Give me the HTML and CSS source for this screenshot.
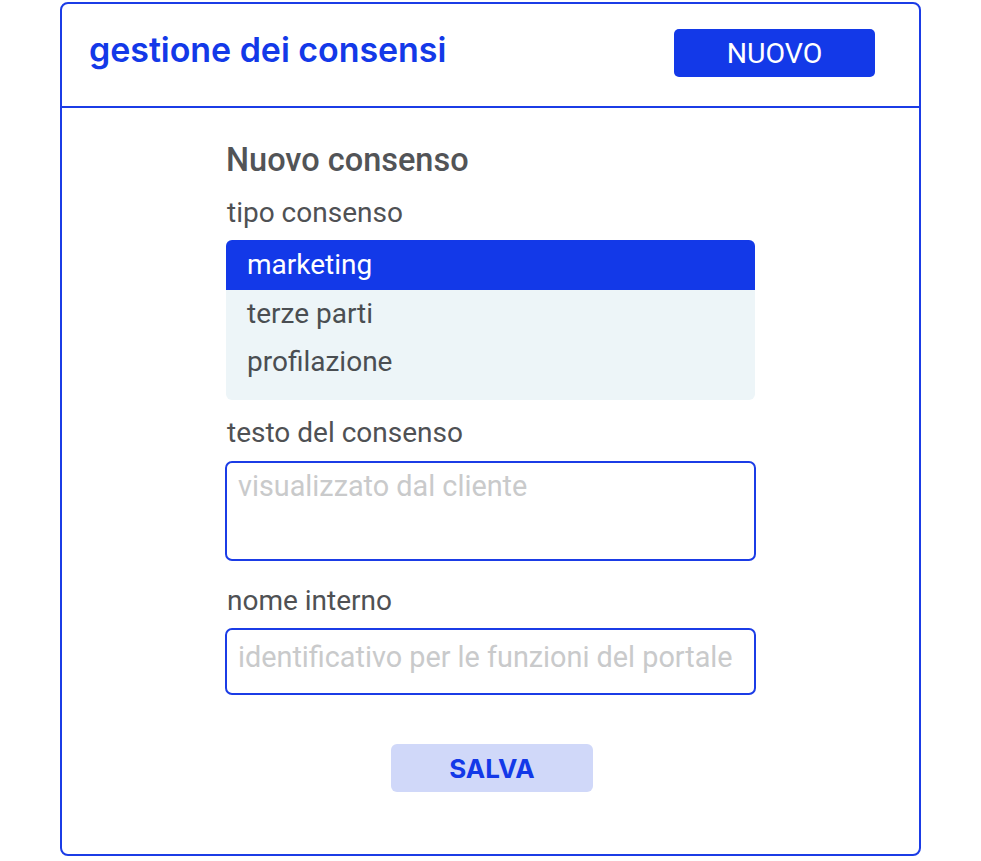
FILE: index.html
```html
<!DOCTYPE html>
<html lang="it">
<head>
<meta charset="utf-8">
<title>gestione dei consensi</title>
<link rel="stylesheet" href="styles.css">
</head>
<body>
<div class="card">
  <header class="card-head">
    <h1 class="title">gestione dei consensi</h1>
    <button class="btn-new">NUOVO</button>
  </header>
  <main class="card-body">
    <form class="form">
      <h2 class="form-title">Nuovo consenso</h2>
      <label class="label">tipo consenso</label>
      <ul class="list">
        <li class="item selected">marketing</li>
        <li class="item">terze parti</li>
        <li class="item">profilazione</li>
      </ul>
      <label class="label label-gap">testo del consenso</label>
      <div class="field textarea"><span class="ph">visualizzato dal cliente</span></div>
      <label class="label label-gap2">nome interno</label>
      <div class="field input"><span class="ph">identificativo per le funzioni del portale</span></div>
      <div class="actions"><button type="button" class="btn-save">SALVA</button></div>
    </form>
  </main>
</div>
</body>
</html>
```
FILE: styles.css
```css
* { box-sizing: border-box; }
html, body { margin: 0; padding: 0; background: #fff; }
body { font-family: Roboto, "Liberation Sans", sans-serif; }
.card {
  margin: 2px 0 0 60px;
  width: 861px;
  height: 854px;
  border: 2px solid #1b3ce6;
  border-radius: 8px;
  display: flex;
  flex-direction: column;
}
.card-head {
  height: 104px;
  border-bottom: 2px solid #1b3ce6;
  display: flex;
  align-items: flex-start;
  justify-content: space-between;
  padding: 0 44px 0 27px;
}
.title {
  margin: 26px 0 0;
  font-family: Inter, "Liberation Sans", sans-serif;
  font-weight: 600;
  font-size: 34px;
  line-height: 40px;
  color: #1339e8;
  letter-spacing: -0.05px;
}
.btn-new {
  margin-top: 25px;
  width: 201px;
  height: 48px;
  border: none;
  border-radius: 5px;
  background: #1339e8;
  color: #fff;
  font-family: Roboto, sans-serif;
  font-size: 28.5px;
  font-weight: 400;
  padding: 0;
}
.card-body { flex: 1; padding: 32px 0 0 162px; }
.form { width: 532px; display: flex; flex-direction: column; }
.form-title {
  margin: 0;
  font-size: 32.5px;
  font-weight: 500;
  line-height: 40px;
  color: #525457;
  padding-left: 2px;
}
.label {
  font-size: 28px;
  line-height: 30px;
  color: #4f5154;
  margin-top: 18px;
  padding-left: 3px;
}
.list {
  list-style: none;
  margin: 12px 0 0 2px;
  padding: 0 0 14px;
  background: #edf5f8;
  border-radius: 6px;
  overflow: hidden;
  width: 529px;
}
.item {
  height: 48px;
  line-height: 48px;
  padding-left: 21px;
  font-size: 28px;
  color: #4a4e52;
}
.item.selected {
  background: #1339e8;
  color: #fff;
  height: 50px;
  line-height: 50px;
}
.label-gap { margin-top: 18px; }
.label-gap2 { margin-top: 25px; }
.field {
  border: 2px solid #1b3ce6;
  border-radius: 7px;
  width: 531px;
  margin-left: 1px;
  padding: 7px 11px;
  font-size: 28.8px;
  line-height: 32px;
}
.textarea { height: 100px; margin-top: 13px; }
.input { height: 67px; margin-top: 12px; padding-top: 11px; }
.ph { color: #c9cacb; white-space: nowrap; }
.actions { display: flex; justify-content: center; margin-top: 49px; padding-left: 4px; }
.btn-save {
  width: 202px;
  height: 48px;
  border: none;
  border-radius: 6px;
  background: #d0d8f9;
  color: #1339e8;
  font-family: Inter, "Liberation Sans", sans-serif;
  font-weight: 700;
  font-size: 26px;
  padding: 0;
}
```
